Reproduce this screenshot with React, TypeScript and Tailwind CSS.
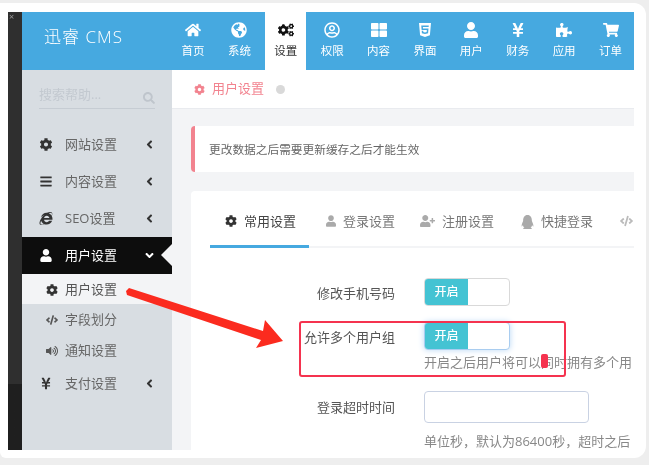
import {
  FaAngleDown,
  FaAngleLeft,
  FaBars,
  FaCode,
  FaCog,
  FaCogs,
  FaGlobeAmericas,
  FaHome,
  FaHtml5,
  FaInternetExplorer,
  FaPuzzlePiece,
  FaQq,
  FaRegUserCircle,
  FaSearch,
  FaShoppingCart,
  FaThLarge,
  FaUser,
  FaUserPlus,
  FaVolumeUp,
  FaYenSign,
} from "react-icons/fa";

const navItems = [
  { label: "首页", icon: FaHome },
  { label: "系统", icon: FaGlobeAmericas },
  { label: "设置", icon: FaCogs, active: true },
  { label: "权限", icon: FaRegUserCircle },
  { label: "内容", icon: FaThLarge },
  { label: "界面", icon: FaHtml5 },
  { label: "用户", icon: FaUser },
  { label: "财务", icon: FaYenSign },
  { label: "应用", icon: FaPuzzlePiece },
  { label: "订单", icon: FaShoppingCart },
];

const menuTop = [
  { label: "网站设置", icon: FaCog },
  { label: "内容设置", icon: FaBars },
  { label: "SEO设置", icon: FaInternetExplorer },
];

const subMenu = [
  { label: "字段划分", icon: FaCode },
  { label: "通知设置", icon: FaVolumeUp },
];

const tabs = [
  { label: "登录设置", icon: FaUser, iconClass: "w-[10px]" },
  { label: "注册设置", icon: FaUserPlus, iconClass: "w-[15px]" },
  { label: "快捷登录", icon: FaQq, iconClass: "w-[13px] h-[14px]" },
];

function Toggle({ focused }: { focused?: boolean }) {
  return (
    <div
      className={`flex h-[28px] w-[86px] overflow-hidden rounded border bg-white ${
        focused ? "border-[#a9cdf0] shadow-[0_0_6px_#b9d8f5]" : "border-[#d9d9d9]"
      }`}
    >
      <div className="flex w-[43px] items-center justify-center bg-[#44c3d3] text-[12px] font-medium text-white">
        开启
      </div>
    </div>
  );
}

export default function App() {
  return (
    <div
      className="relative h-[465px] w-[649px] overflow-hidden bg-[#eeeeee] pt-[3px] text-[13px] text-[#666] blur-[0.4px]"
      style={{ fontFamily: '"Open Sans", "Noto Sans CJK SC", sans-serif' }}
    >
      <div className="flex h-[455px] w-[646px] rounded-r-xl rounded-bl-md bg-white pl-[8px] pt-[9px]">
        {/* dark strip of the window behind */}
        <div className="h-[438px] w-[14px] bg-gradient-to-b from-[#2f2f2f] from-85% to-[#1f1f1f] to-85% pl-[1px] text-[9px] leading-[10px] text-[#999]">
          ×
        </div>

        <div className="flex h-[438px] w-[612px] flex-col overflow-hidden">
          {/* top bar */}
          <div className="flex h-[58px] shrink-0 bg-[#46a9e0] text-white">
            <div className="w-[148px] pl-[22px] pt-[12px] text-[17px] font-light tracking-[1px]">迅睿 CMS</div>
            <div className="flex gap-[5.4px] pl-[2.5px]">
              {navItems.map((item) => (
                <div
                  key={item.label}
                  className={`flex w-[41px] flex-col items-center pt-[10px] text-[11.5px] ${
                    item.active ? "bg-white text-[#333]" : ""
                  }`}
                >
                  <item.icon className={`h-[16px] w-[16px] ${item.active ? "text-[#111]" : ""}`} />
                  <span className="mt-[5px] leading-[16px]">{item.label}</span>
                </div>
              ))}
            </div>
          </div>

          <div className="flex min-h-0 flex-1">
            {/* sidebar */}
            <div className="w-[150px] shrink-0 bg-[#d8dde2] text-[#666]">
              <div className="mx-[17px] mt-[13px] flex h-[26px] w-[116px] items-center justify-between border-b border-[#c6ccd3] pb-[2px] text-[#bfc5cc]">
                <span className="text-[13px] text-[#c3c9d0]">搜索帮助...</span>
                <FaSearch className="mt-[6px] h-[12px] w-[12px]" />
              </div>
              <div className="mt-[17px]">
                {menuTop.map((item) => (
                  <div key={item.label} className="flex h-[37px] items-center pl-[17px]">
                    <item.icon className="h-[13px] w-[14px] text-[#333]" />
                    <span className="ml-[12px] w-[78px]">{item.label}</span>
                    <FaAngleLeft className="h-[13px] w-[13px] text-[#333]" />
                  </div>
                ))}
                <div className="relative flex h-[37px] items-center bg-[#0d0d0d] pl-[17px] text-white">
                  <FaUser className="h-[13px] w-[14px]" />
                  <span className="ml-[12px] w-[78px]">用户设置</span>
                  <FaAngleDown className="h-[13px] w-[13px]" />
                  <div className="absolute right-0 top-[7px] h-0 w-0 border-y-[11px] border-r-[11px] border-y-transparent border-r-[#f3f4f6]" />
                </div>
                <div className="flex h-[30px] items-center bg-[#f3f4f6] pl-[24px] pt-[2px] text-[#555]">
                  <FaCog className="h-[12px] w-[12px] text-[#333]" />
                  <span className="ml-[7px]">用户设置</span>
                </div>
                {subMenu.map((item) => (
                  <div key={item.label} className="flex h-[31px] items-center pl-[24px]">
                    <item.icon className="h-[12px] w-[12px] text-[#555]" />
                    <span className="ml-[7px]">{item.label}</span>
                  </div>
                ))}
                <div className="flex h-[35px] items-center pl-[17px]">
                  <FaYenSign className="h-[13px] w-[14px] text-[#333]" />
                  <span className="ml-[12px] w-[78px]">支付设置</span>
                  <FaAngleLeft className="h-[13px] w-[13px] text-[#333]" />
                </div>
              </div>
            </div>

            {/* main */}
            <div className="min-w-0 flex-1 overflow-hidden bg-[#f3f4f6]">
              <div className="flex h-[39px] items-center border-b border-[#e9ebef] bg-white pl-[22px] text-[#f2838f]">
                <FaCog className="h-[11px] w-[11px]" />
                <span className="ml-[7px]">用户设置</span>
                <span className="ml-[12px] h-[9px] w-[9px] rounded-full bg-[#d9d9d9]" />
              </div>

              <div className="ml-[19px] mt-[17px] flex h-[46px] items-center rounded-l border-l-4 border-[#f2838f] bg-white pl-[14px] pt-[2px] text-[11.7px] text-[#666]">
                更改数据之后需要更新缓存之后才能生效
              </div>

              <div className="ml-[19px] mt-[19px] h-[259px] overflow-hidden rounded-tl bg-white pl-[19px]">
                <div className="flex h-[57px] items-end border-b-2 border-[#f3f4f6]">
                  <div className="-mb-[2px] flex h-[36px] w-[99px] shrink-0 border-b-[3px] border-[#46a9e0] leading-[18px] text-[#444]">
                    <div className="flex w-[27px] justify-end pt-[3px]">
                      <FaCog className="h-[12px] w-[12px] text-[#333]" />
                    </div>
                    <span className="ml-[7px]">常用设置</span>
                  </div>
                  {tabs.map((tab) => (
                    <div key={tab.label} className="-mb-[2px] flex h-[36px] w-[99px] shrink-0 leading-[18px] text-[#777]">
                      <div className="flex w-[27px] justify-end pt-[3px]">
                        <tab.icon className={`h-[12px] text-[#aaa] ${tab.iconClass}`} />
                      </div>
                      <span className="ml-[7px]">{tab.label}</span>
                    </div>
                  ))}
                  <div className="-mb-[2px] flex h-[36px] shrink-0 pl-[14px] pt-[3px] text-[#bbb]">
                    <FaCode className="h-[12px] w-[13px]" />
                  </div>
                </div>

                <div className="grid grid-cols-[185px_1fr] gap-x-[29px] text-[#555]">
                  <div className="mt-[30px] text-right leading-[30px]">修改手机号码</div>
                  <div className="mt-[30px]"><Toggle /></div>

                  <div className="mt-[14px] text-right leading-[30px]">允许多个用户组</div>
                  <div className="mt-[14px]"><Toggle focused /></div>

                  <div />
                  <div className="h-[20px] whitespace-nowrap leading-[20px] text-[#888]">开启之后用户将可以同时拥有多个用</div>

                  <div className="mt-[19px] text-right leading-[32px]">登录超时时间</div>
                  <div className="mt-[19px] h-[32px] w-[165px] rounded border border-[#c9d2e3] bg-white" />

                  <div />
                  <div className="mt-[8px] h-[20px] whitespace-nowrap leading-[20px] text-[#888]">单位秒，默认为86400秒，超时之后</div>
                </div>
              </div>
            </div>
          </div>
        </div>
      </div>

      {/* annotation drawn over the screenshot */}
      <div className="absolute left-[299px] top-[321px] h-[56px] w-[267px] rounded-[3px] border-2 border-[#f5334f]" />
      <div className="absolute left-[541px] top-[354px] h-[14px] w-[7px] rounded-[2px] bg-[#f5334f]" />
      <svg className="absolute left-0 top-0" width="649" height="465" viewBox="0 0 649 465">
        <path d="M126 291 L129 288 L263 331 L265 320 L283 341 L256 348 L261 340 L127 295 Z" fill="#fb2b1f" />
      </svg>
    </div>
  );
}
